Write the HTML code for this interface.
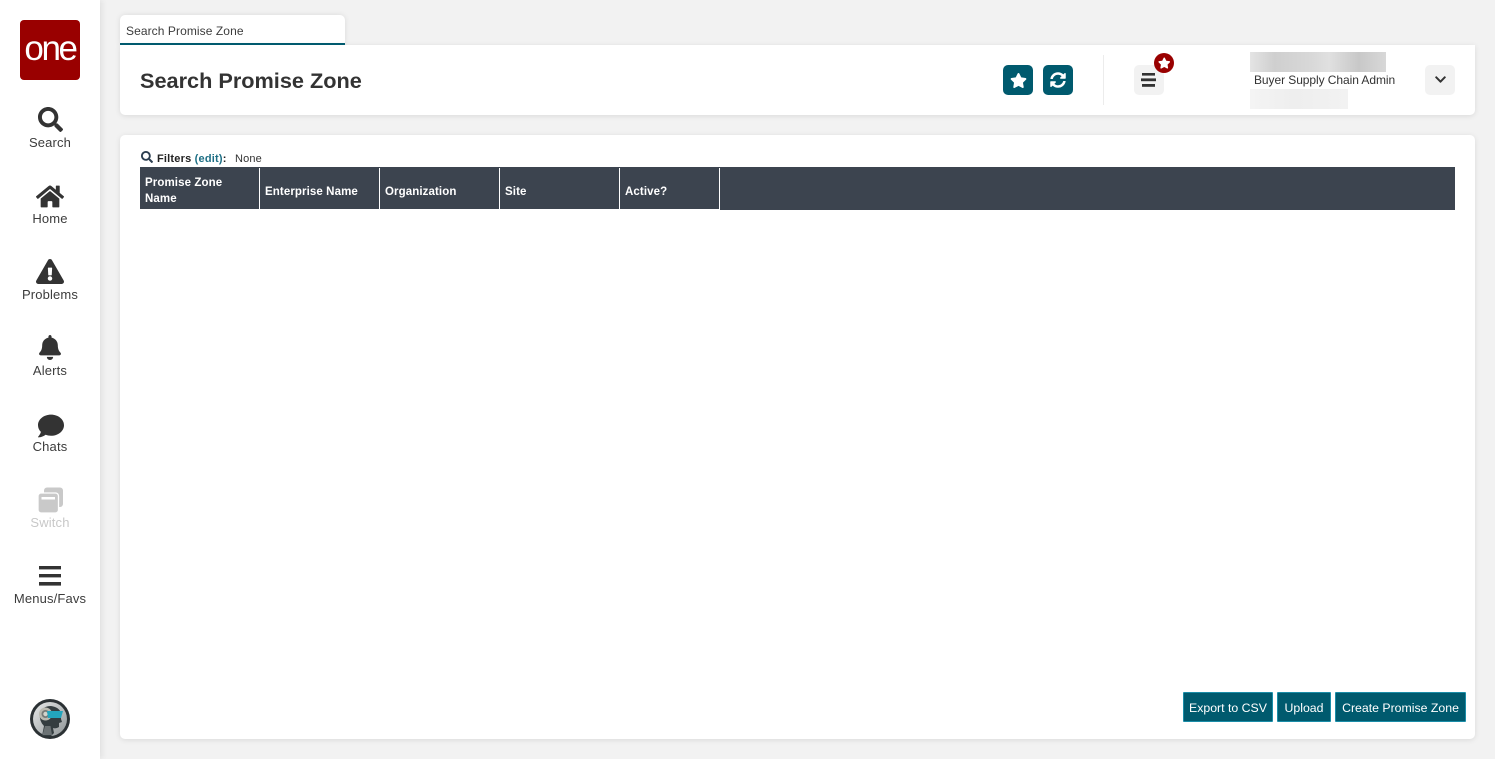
<!DOCTYPE html>
<html><head><meta charset="utf-8"><style>
*{box-sizing:border-box}
html,body{margin:0;padding:0}
body{width:1495px;height:759px;overflow:hidden;background:#f2f2f2;position:relative;font-family:"Liberation Sans",sans-serif;color:#333}
.a{position:absolute}
.t{position:absolute;white-space:nowrap}
.side{left:0;top:0;width:100px;height:759px;background:#fff;box-shadow:2px 0 6px rgba(0,0,0,.08)}
.lb{position:absolute;left:0;width:100px;text-align:center;font-size:13px;line-height:16px;color:#3c3c3c;letter-spacing:.15px}
.card{background:#fff;border-radius:5px;box-shadow:0 1px 6px rgba(0,0,0,.1)}
.th{position:absolute;top:171px;height:41px;color:#fff;font-weight:bold;font-size:11.5px;line-height:16px;padding-left:5px;display:flex;align-items:center;letter-spacing:.1px}
.btn{position:absolute;top:692px;height:30px;background:#005a6e;border:1px solid #1a8da8;color:#fff;font-size:12.3px;line-height:30px;text-align:center;border-radius:1px;white-space:nowrap}
.ib{position:absolute;top:65px;width:30px;height:30px;border-radius:5px;background:#005a6e}
.gb{position:absolute;width:30px;height:30px;border-radius:5px;background:#f2f2f2}
svg{position:absolute;display:block}
</style></head><body>

<div class="a side"></div>
<div class="a" style="left:20px;top:20px;width:60px;height:60px;background:#990000;border-radius:4px;overflow:hidden"><div class="t" style="left:0;width:60px;text-align:center;top:8px;font-size:35px;line-height:42px;color:#fff;letter-spacing:-2.4px">one</div></div>

<svg style="left:38px;top:107px" width="25" height="25" viewBox="0 0 512 512" fill="#333"><path d="M505 442.7L405.3 343c-4.5-4.5-10.6-7-17-7H372c27.6-35.3 44-79.7 44-128C416 93.1 322.9 0 208 0S0 93.1 0 208s93.1 208 208 208c48.3 0 92.7-16.4 128-44v16.3c0 6.4 2.5 12.5 7 17l99.7 99.7c9.4 9.4 24.6 9.4 33.9 0l28.3-28.3c9.4-9.4 9.4-24.6.1-34zM208 336c-70.7 0-128-57.2-128-128 0-70.7 57.2-128 128-128 70.7 0 128 57.2 128 128 0 70.7-57.2 128-128 128z"/></svg>
<div class="lb" style="top:135px">Search</div>

<svg style="left:36px;top:183.5px" width="28" height="25" viewBox="0 0 576 512" fill="#333"><path d="M280.37 148.26L96 300.11V464a16 16 0 0 0 16 16l112.06-.29a16 16 0 0 0 15.92-16V368a16 16 0 0 1 16-16h64a16 16 0 0 1 16 16v95.64a16 16 0 0 0 16 16.05L464 480a16 16 0 0 0 16-16V300L295.67 148.26a12.19 12.19 0 0 0-15.3 0zM571.6 251.47L488 182.56V44.05a12 12 0 0 0-12-12h-56a12 12 0 0 0-12 12v72.61L318.47 43a48 48 0 0 0-61 0L4.34 251.47a12 12 0 0 0-1.6 16.9l25.5 31A12 12 0 0 0 45.15 301l235.22-193.74a12.19 12.19 0 0 1 15.3 0L530.9 301a12 12 0 0 0 16.9-1.6l25.5-31a12 12 0 0 0-1.7-16.93z"/></svg>
<div class="lb" style="top:211px">Home</div>

<svg style="left:36px;top:259px" width="28" height="25" viewBox="0 0 576 512" fill="#333"><path d="M569.517 440.013C587.975 472.007 564.806 512 527.94 512H48.054c-36.937 0-59.999-40.055-41.577-71.987L246.423 23.985c18.467-32.009 64.72-31.951 83.154 0l239.94 416.028zM288 354c-25.405 0-46 20.595-46 46s20.595 46 46 46 46-20.595 46-46-20.595-46-46-46zm-43.673-165.346l7.418 136c.347 6.364 5.609 11.346 11.982 11.346h48.546c6.373 0 11.635-4.982 11.982-11.346l7.418-136c.375-6.874-5.098-12.654-11.982-12.654h-63.383c-6.884 0-12.356 5.78-11.981 12.654z"/></svg>
<div class="lb" style="top:287px">Problems</div>

<svg style="left:39px;top:335px" width="22" height="25" viewBox="0 0 448 512" fill="#333"><path d="M224 512c35.32 0 63.97-28.65 63.97-64H160.03c0 35.35 28.65 64 63.97 64zm215.39-149.71c-19.32-20.76-55.47-51.99-55.47-154.29 0-77.7-54.48-139.9-127.94-155.16V32c0-17.67-14.32-32-31.98-32s-31.98 14.33-31.98 32v20.84C118.56 68.1 64.08 130.3 64.08 208c0 102.3-36.15 133.53-55.47 154.29-6 6.45-8.66 14.16-8.61 21.71.11 16.4 12.98 32 32.1 32h383.8c19.12 0 32-15.6 32.1-32 .05-7.55-2.61-15.27-8.61-21.71z"/></svg>
<div class="lb" style="top:363px">Alerts</div>

<svg style="left:37.5px;top:413px" width="26" height="26" viewBox="0 0 512 512" fill="#333"><path d="M256 32C114.6 32 0 125.1 0 240c0 49.6 21.4 95 57 130.7C44.5 421.1 2.7 466 2.2 466.5c-2.2 2.3-2.8 5.7-1.5 8.7S4.8 480 8 480c66.3 0 116-31.8 140.6-51.4 32.7 12.3 69 19.4 107.4 19.4 141.4 0 256-93.1 256-208S397.4 32 256 32z"/></svg>
<div class="lb" style="top:439px">Chats</div>

<svg style="left:38px;top:487px" width="25" height="26" viewBox="0 0 25 26"><rect x="6" y="0.5" width="19" height="19.5" rx="3" fill="#c9c9c9"/><rect x="0" y="6" width="20.5" height="20" rx="3" fill="#c9c9c9" stroke="#fff" stroke-width="1.3"/><rect x="3.5" y="10" width="13.5" height="2.5" fill="#fff"/></svg>
<div class="lb" style="top:515px;color:#c8c8c8">Switch</div>

<svg style="left:39px;top:566px" width="22" height="20" viewBox="0 0 22 20" fill="#333"><rect y="0" width="22" height="3.4"/><rect y="8" width="22" height="3.4"/><rect y="16" width="22" height="3.6"/></svg>
<div class="lb" style="top:591px">Menus/Favs</div>

<svg style="left:30px;top:699px" width="40" height="40" viewBox="0 0 40 40">
<defs><linearGradient id="g" x1="0" y1="0" x2="1" y2="1"><stop offset="0" stop-color="#e6e8e8"/><stop offset="1" stop-color="#8f9597"/></linearGradient></defs>
<circle cx="20" cy="20" r="20" fill="#2b3134"/><circle cx="20" cy="20" r="17" fill="url(#g)"/>
<path d="M10 15Q12 7 21 7Q29 8 31 14V20L32 23 29 24V28Q26 30 23 29L24 34 21 37H12L14 27Q9 22 10 15z" fill="#343d40"/>
<circle cx="15.5" cy="15" r="6.5" fill="#b9b9b0"/><circle cx="15.5" cy="15" r="4" fill="#777b78"/><circle cx="15.5" cy="15" r="2.2" fill="#d4d4cc"/>
<path d="M17 12H33L31 19H18z" fill="#23a5bd"/><path d="M15 27L12.5 36H22L20.5 27z" fill="#6b7274"/>
</svg>

<!-- Tab -->
<div class="a" style="left:120px;top:15px;width:225px;height:30px;background:#fff;border-radius:5px 5px 0 0;box-shadow:0 0 6px rgba(0,0,0,.1)"></div>
<div class="t" style="left:126px;top:23px;font-size:12px;line-height:16px;color:#3c3c3c;letter-spacing:.08px">Search Promise Zone</div>

<!-- Header card -->
<div class="a card" style="left:120px;top:45px;width:1355px;height:70px;border-top-left-radius:0;border-top-right-radius:0"></div>
<div class="a" style="left:120px;top:43px;width:225px;height:2px;background:#005a6e"></div>
<div class="t" style="left:140px;top:67px;font-size:21.7px;line-height:28px;font-weight:bold;color:#333">Search Promise Zone</div>

<div class="ib" style="left:1003px"></div>
<svg style="left:1009.5px;top:72.5px" width="17" height="15" viewBox="0 0 576 512" fill="#fff"><path d="M259.3 17.8L194 150.2 47.9 171.5c-26.2 3.8-36.7 36.1-17.7 54.6l105.7 103-25 145.5c-4.5 26.3 23.2 46 46.4 33.7L288 439.6l130.7 68.7c23.2 12.2 50.9-7.4 46.4-33.7l-25-145.5 105.7-103c19-18.5 8.5-50.8-17.7-54.6L382 150.2 316.7 17.8c-11.7-23.6-45.6-23.9-57.4 0z"/></svg>
<div class="ib" style="left:1043px"></div>
<svg style="left:1050px;top:72px" width="16" height="16" viewBox="0 0 512 512" fill="#fff"><path d="M370.72 133.28C339.458 104.008 298.888 87.962 255.848 88c-77.458.068-144.328 53.178-162.791 126.85-1.344 5.363-6.122 9.15-11.651 9.15H24.103c-7.498 0-13.194-6.807-11.807-14.176C33.933 94.924 134.813 8 256 8c66.448 0 126.791 26.136 171.315 68.685L463.03 40.97C478.149 25.851 504 36.559 504 57.941V192c0 13.255-10.745 24-24 24H345.941c-21.382 0-32.09-25.851-16.971-40.971l41.75-41.749zM32 296h134.059c21.382 0 32.09 25.851 16.971 40.971l-41.75 41.75c31.262 29.273 71.835 45.319 114.876 45.28 77.418-.07 144.315-53.144 162.787-126.849 1.344-5.363 6.122-9.15 11.651-9.15h57.304c7.498 0 13.194 6.807 11.807 14.176C478.067 417.076 377.187 504 256 504c-66.448 0-126.791-26.136-171.315-68.685L48.97 471.03C33.851 486.149 8 475.441 8 454.059V320c0-13.255 10.745-24 24-24z"/></svg>

<div class="a" style="left:1103px;top:55px;width:1px;height:50px;background:#ececec"></div>

<div class="gb" style="left:1134px;top:65px"></div>
<svg style="left:1141px;top:73px" width="15" height="14" viewBox="0 0 15 14" fill="#333"><rect x="1" y="0" width="13" height="2.6"/><rect x="0" y="5.4" width="15" height="2.8"/><rect x="1" y="11" width="13" height="2.8"/></svg>
<div class="a" style="left:1154px;top:53px;width:20px;height:20px;border-radius:50%;background:#990000"></div>
<svg style="left:1158px;top:57px" width="12.5" height="12" viewBox="0 0 576 512" fill="#fff"><path d="M259.3 17.8L194 150.2 47.9 171.5c-26.2 3.8-36.7 36.1-17.7 54.6l105.7 103-25 145.5c-4.5 26.3 23.2 46 46.4 33.7L288 439.6l130.7 68.7c23.2 12.2 50.9-7.4 46.4-33.7l-25-145.5 105.7-103c19-18.5 8.5-50.8-17.7-54.6L382 150.2 316.7 17.8c-11.7-23.6-45.6-23.9-57.4 0z"/></svg>

<div class="a" style="left:1250px;top:52px;width:136px;height:20px;background:linear-gradient(90deg,#e4e4e4 0%,#cfcfcf 18%,#d8d8d8 45%,#e0e0e0 58%,#c8c8c8 80%,#d8d8d8 100%)"></div>
<div class="t" style="left:1254px;top:72px;font-size:12px;line-height:16px;color:#333;letter-spacing:-.07px">Buyer Supply Chain Admin</div>
<div class="a" style="left:1250px;top:89px;width:98px;height:20px;background:linear-gradient(90deg,#f4f4f4 0%,#eeeeee 45%,#f2f2f2 100%)"></div>

<div class="gb" style="left:1425px;top:65px"></div>
<svg style="left:1435px;top:73px" width="11" height="13" viewBox="0 0 448 512" fill="#333"><path d="M207.029 381.476L12.686 187.132c-9.373-9.373-9.373-24.569 0-33.941l22.667-22.667c9.357-9.357 24.522-9.375 33.901-.04L224 284.505l154.745-154.021c9.379-9.335 24.544-9.317 33.901.04l22.667 22.667c9.373 9.373 9.373 24.569 0 33.941L240.971 381.476c-9.373 9.372-24.569 9.372-33.942 0z"/></svg>

<!-- Main card -->
<div class="a card" style="left:120px;top:135px;width:1355px;height:604px"></div>
<svg style="left:141px;top:151px" width="12" height="12" viewBox="0 0 512 512" fill="#2c3e50"><path d="M505 442.7L405.3 343c-4.5-4.5-10.6-7-17-7H372c27.6-35.3 44-79.7 44-128C416 93.1 322.9 0 208 0S0 93.1 0 208s93.1 208 208 208c48.3 0 92.7-16.4 128-44v16.3c0 6.4 2.5 12.5 7 17l99.7 99.7c9.4 9.4 24.6 9.4 33.9 0l28.3-28.3c9.4-9.4 9.4-24.6.1-34zM208 336c-70.7 0-128-57.2-128-128 0-70.7 57.2-128 128-128 70.7 0 128 57.2 128 128 0 70.7-57.2 128-128 128z"/></svg>
<div class="t" style="left:157px;top:151px;font-size:11px;line-height:16px;font-weight:bold;color:#222;letter-spacing:.2px">Filters <span style="color:#1d6f85">(edit)</span>:</div>
<div class="t" style="left:235px;top:151px;font-size:11px;line-height:16px;color:#333;letter-spacing:.15px">None</div>

<div class="a" style="left:140px;top:167px;width:1315px;height:43px;background:#3c444f"></div>
<div class="a" style="left:140px;top:209px;width:580px;height:1px;background:#fff"></div>
<div class="a" style="left:259px;top:168px;width:1px;height:41px;background:#fff"></div>
<div class="a" style="left:379px;top:168px;width:1px;height:41px;background:#fff"></div>
<div class="a" style="left:499px;top:168px;width:1px;height:41px;background:#fff"></div>
<div class="a" style="left:619px;top:168px;width:1px;height:41px;background:#fff"></div>
<div class="a" style="left:719px;top:168px;width:1px;height:42px;background:#fff"></div>
<div class="th" style="left:140px;width:119px;top:170px">Promise Zone<br>Name</div>
<div class="th" style="left:260px;width:119px">Enterprise Name</div>
<div class="th" style="left:380px;width:119px">Organization</div>
<div class="th" style="left:500px;width:119px">Site</div>
<div class="th" style="left:620px;width:99px">Active?</div>

<div class="btn" style="left:1183px;width:90px">Export to CSV</div>
<div class="btn" style="left:1277px;width:54px">Upload</div>
<div class="btn" style="left:1335px;width:131px">Create Promise Zone</div>
</body></html>
